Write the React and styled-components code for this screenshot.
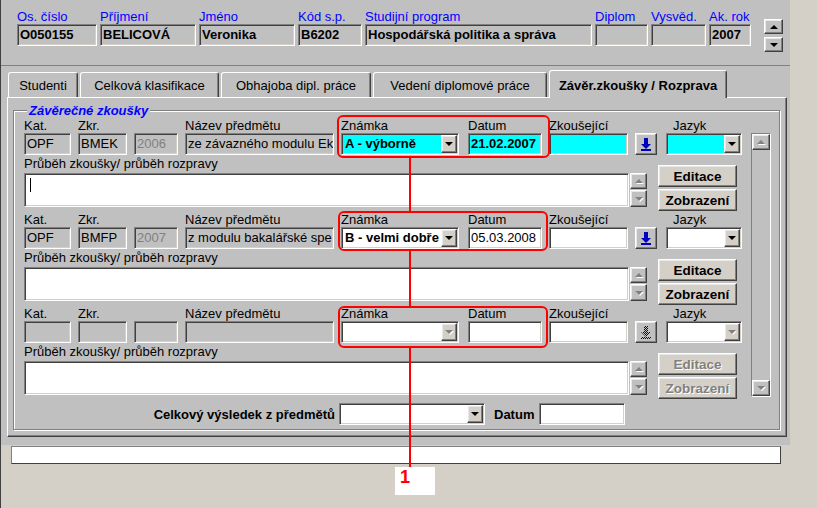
import React from "react";
import styled, { createGlobalStyle } from "styled-components";

const GlobalStyle = createGlobalStyle`
  html, body {
    margin: 0;
    padding: 0;
  }
  body {
    background: #d4d0c8;
    font-family: "Liberation Sans", Arial, sans-serif;
    font-size: 13px;
    color: #000;
  }
`;

const sunken = `
  border: 1px solid;
  border-color: #808080 #ffffff #ffffff #808080;
  box-shadow: inset 1px 1px 0 #404040, inset -1px -1px 0 #d4d0c8;
`;

const raised = `
  border: 1px solid;
  border-color: #ffffff #404040 #404040 #ffffff;
  box-shadow: inset -1px -1px 0 #808080, inset 1px 1px 0 #e8e8e8;
`;

const header = [
  { label: "Os. číslo", value: "O050155" },
  { label: "Příjmení", value: "BELICOVÁ" },
  { label: "Jméno", value: "Veronika" },
  { label: "Kód s.p.", value: "B6202" },
  { label: "Studijní program", value: "Hospodářská politika a správa" },
  { label: "Diplom", value: "" },
  { label: "Vysvěd.", value: "" },
  { label: "Ak. rok", value: "2007" },
];

const tabs = [
  { title: "Studenti", width: 70 },
  { title: "Celková klasifikace", width: 139 },
  { title: "Obhajoba dipl. práce", width: 150 },
  { title: "Vedení diplomové práce", width: 174 },
  { title: "Závěr.zkoušky / Rozprava", width: 178, active: true },
];

const records = [
  {
    kat: "OPF",
    zkr: "BMEK",
    rok: "2006",
    nazev: "ze závazného modulu Ek",
    znamka: "A - výborně",
    datum: "21.02.2007",
    datumBold: true,
    current: true,
  },
  {
    kat: "OPF",
    zkr: "BMFP",
    rok: "2007",
    nazev: "z modulu bakalářské spe",
    znamka: "B - velmi dobře",
    datum: "05.03.2008",
  },
  { empty: true },
];

const Screen = styled.div`
  position: relative;
  width: 817px;
  height: 508px;
  box-sizing: border-box;
  border-left: 1px solid #404040;
  overflow: hidden;
`;

const Window = styled.div`
  width: 789px;
  height: 445px;
  background: #c0c0c0;
`;

const Header = styled.div`
  display: flex;
  height: 66px;
  box-sizing: border-box;
  padding: 9px 0 0 16px;
  border-bottom: 1px solid #808080;
`;

const HeaderGrid = styled.div`
  display: grid;
  grid-template-columns: 80px 96px 96px 64px 227px 53px 55px 42px;
  grid-template-rows: 15px 22px;
  column-gap: 3px;
  grid-auto-flow: column;
`;

const HeadLabel = styled.div`
  color: #0000ff;
  line-height: 15px;
  white-space: nowrap;
`;

const HeadValue = styled.div`
  ${sunken};
  box-sizing: border-box;
  height: 22px;
  padding: 0 2px;
  font-size: 13px;
  font-weight: bold;
  line-height: 20px;
  white-space: nowrap;
  overflow: hidden;
`;

const SpinCol = styled.div`
  display: flex;
  flex-direction: column;
  gap: 3px;
  margin: 10px 0 0 13px;
`;

const SpinBtn = styled.div`
  ${raised};
  box-sizing: border-box;
  width: 19px;
  height: 15px;
  background: #c0c0c0;
  display: flex;
  align-items: center;
  justify-content: center;
`;

const Arrow = styled.span`
  width: 0;
  height: 0;
  border-left: ${(p) => p.$size || 4}px solid transparent;
  border-right: ${(p) => p.$size || 4}px solid transparent;
  ${(p) =>
    p.$up
      ? `border-bottom: ${p.$size || 4}px solid ${p.$color || "#000"};`
      : `border-top: ${p.$size || 4}px solid ${p.$color || "#000"};`}
  filter: ${(p) => (p.$dim ? "drop-shadow(1px 1px 0 #fff)" : "none")};
`;

const TabArea = styled.div`
  padding: 4px 0 0 6px;
`;

const TabStrip = styled.div`
  display: flex;
  align-items: flex-end;
  gap: 2px;
  height: 27px;
  padding-left: 1px;
  position: relative;
  z-index: 1;
`;

const Tab = styled.div`
  width: ${(p) => p.$width}px;
  height: ${(p) => (p.$active ? 28 : 25)}px;
  margin-bottom: ${(p) => (p.$active ? -1 : 0)}px;
  box-sizing: border-box;
  border: 1px solid;
  border-color: #ffffff #404040 transparent #ffffff;
  border-bottom: none;
  border-radius: 3px 3px 0 0;
  box-shadow: inset -1px 0 0 #808080;
  background: #c0c0c0;
  display: flex;
  align-items: center;
  justify-content: center;
  padding-top: ${(p) => (p.$active ? 1 : 0)}px;
  font-weight: ${(p) => (p.$active ? "bold" : "normal")};
  white-space: nowrap;
`;

const Panel = styled.div`
  width: 780px;
  height: 340px;
  box-sizing: border-box;
  border: 1px solid;
  border-color: #ffffff #404040 #404040 #ffffff;
  box-shadow: inset -1px -1px 0 #808080;
  padding: 5px 6px 0 5px;
`;

const Group = styled.fieldset`
  margin: 0;
  min-width: 0;
  padding: 0 8px 4px 10px;
  border: 1px solid #808080;
  box-shadow: inset 1px 1px 0 #ffffff, 1px 1px 0 #ffffff;
`;

const Legend = styled.legend`
  margin-left: 3px;
  padding: 0 2px;
  line-height: 15px;
  background: #c0c0c0;
  color: #0000ff;
  font-weight: bold;
  font-style: italic;
`;

const GroupBody = styled.div`
  display: flex;
  align-items: flex-start;
`;

const Records = styled.div`
  display: flex;
  flex-direction: column;
  gap: 1px;
  width: 718px;
`;

const Record = styled.div`
  display: flex;
  flex-direction: column;
`;

const TopGrid = styled.div`
  display: grid;
  grid-template-columns: 54px 56px 51px 156px 127px 81px 86px 31px 76px;
  grid-template-rows: 15px 22px;
  grid-auto-flow: column;
`;

const Label = styled.div`
  line-height: 15px;
  padding-left: ${(p) => p.$indent || 0}px;
  white-space: nowrap;
`;

const Field = styled.div`
  ${sunken};
  box-sizing: border-box;
  width: ${(p) => p.$width}px;
  height: 22px;
  padding: 0 2px;
  line-height: 20px;
  background: ${(p) => p.$bg || "#ffffff"};
  color: ${(p) => p.$color || "#000"};
  font-weight: ${(p) => (p.$bold ? "bold" : "normal")};
  white-space: nowrap;
  overflow: hidden;
`;

const SelectBox = styled.div`
  ${sunken};
  box-sizing: border-box;
  width: ${(p) => p.$width}px;
  height: 22px;
  padding: 1px;
  display: flex;
  background: ${(p) => p.$bg || "#ffffff"};
`;

const SelectValue = styled.div`
  flex: 1;
  min-width: 0;
  padding-left: 2px;
  line-height: 18px;
  font-weight: bold;
  white-space: nowrap;
  overflow: hidden;
`;

const DropBtn = styled.div`
  ${raised};
  box-sizing: border-box;
  width: 16px;
  height: 18px;
  background: #d4d0c8;
  display: flex;
  align-items: center;
  justify-content: center;
`;

const IconBtn = styled.div`
  ${raised};
  box-sizing: border-box;
  width: 22px;
  height: 22px;
  background: #c0c0c0;
  display: flex;
  align-items: center;
  justify-content: center;
`;

const Lower = styled.div`
  display: flex;
  height: 55px;
  margin-top: 1px;
`;

const NoteCol = styled.div`
  display: flex;
  flex-direction: column;
`;

const NoteLabel = styled.div`
  line-height: 16px;
  white-space: nowrap;
`;

const NoteRow = styled.div`
  display: flex;
  margin-top: 1px;
`;

const TextBox = styled.div`
  ${sunken};
  box-sizing: border-box;
  width: 605px;
  height: 34px;
  background: #ffffff;
  padding: 4px 0 0 5px;
`;

const Caret = styled.span`
  display: block;
  width: 1px;
  height: 14px;
  background: #000;
`;

const MiniScroll = styled.div`
  display: flex;
  flex-direction: column;
  gap: 1px;
  margin-left: 1px;
`;

const MiniBtn = styled.div`
  ${raised};
  box-sizing: border-box;
  width: 17px;
  height: ${(p) => p.$h}px;
  background: #c0c0c0;
  display: flex;
  align-items: center;
  justify-content: center;
`;

const ButtonCol = styled.div`
  display: flex;
  flex-direction: column;
  gap: 2px;
  margin: 9px 0 0 11px;
`;

const ActionBtn = styled.div`
  ${raised};
  box-sizing: border-box;
  width: 79px;
  height: 22px;
  background: #d4d0c8;
  display: flex;
  align-items: center;
  justify-content: center;
  font-weight: bold;
  font-size: 13.5px;
  color: ${(p) => (p.$disabled ? "#808080" : "#000")};
  text-shadow: ${(p) => (p.$disabled ? "1px 1px 0 #ffffff" : "none")};
`;

const ScrollBar = styled.div`
  box-sizing: border-box;
  width: 20px;
  height: 264px;
  margin: 15px 0 0 9px;
  border: 1px solid;
  border-color: #808080 #ffffff #ffffff #808080;
  background: #c0c0c0;
  display: flex;
  flex-direction: column;
  justify-content: space-between;
`;

const ScrollBtn = styled.div`
  ${raised};
  box-sizing: border-box;
  width: 18px;
  height: 16px;
  background: #c0c0c0;
  display: flex;
  align-items: center;
  justify-content: center;
`;

const Summary = styled.div`
  display: flex;
  align-items: center;
  margin-top: 4px;
`;

const SummaryLabel = styled.div`
  width: 311px;
  margin-right: 4px;
  text-align: right;
  font-weight: bold;
  white-space: nowrap;
`;

const DateLabel = styled.div`
  margin: 0 5px 0 9px;
  font-weight: bold;
`;

const StatusBar = styled.div`
  width: 770px;
  height: 18px;
  margin: 1px 0 0 10px;
  box-sizing: border-box;
  border: 1px solid;
  border-color: #808080 #404040 #404040 #808080;
  background: #ffffff;
`;

const RedBox = styled.div`
  position: absolute;
  box-sizing: border-box;
  border: 2px solid #ff0000;
  border-radius: 6px;
  pointer-events: none;
`;

const RedLine = styled.div`
  position: absolute;
  width: 2px;
  background: #ff0000;
`;

const Callout = styled.div`
  position: absolute;
  left: 394px;
  top: 467px;
  width: 40px;
  height: 28px;
  background: #ffffff;
  box-sizing: border-box;
  padding: 1px 0 0 5px;
  color: #ff0000;
  font-size: 18px;
  font-weight: bold;
  line-height: 18px;
`;

const DownloadIcon = ({ disabled }) => (
  <svg width="10" height="13" viewBox="0 0 10 13">
    <defs>
      <pattern id="dith" width="2" height="2" patternUnits="userSpaceOnUse">
        <rect width="1" height="1" fill="#000080" />
        <rect x="1" y="1" width="1" height="1" fill="#000080" />
      </pattern>
    </defs>
    <g fill={disabled ? "url(#dith)" : "#0000c0"}>
      <rect x="3" y="0" width="4" height="6" />
      <polygon points="0,6 10,6 5,11" />
      <rect x="0" y="11" width="10" height="2" />
    </g>
  </svg>
);

const Select = ({ width, bg, value, disabled }) => (
  <SelectBox $width={width} $bg={bg}>
    <SelectValue>{value}</SelectValue>
    <DropBtn>
      <Arrow $size={4} $color={disabled ? "#808080" : "#000"} $dim={disabled} />
    </DropBtn>
  </SelectBox>
);

const ExamRecord = ({ r }) => {
  const cur = r.current ? "#00ffff" : "#ffffff";
  return (
    <Record>
      <TopGrid>
        <Label>Kat.</Label>
        <Field $width={47} $bg="#c0c0c0">{r.kat}</Field>
        <Label>Zkr.</Label>
        <Field $width={49} $bg="#c0c0c0">{r.zkr}</Field>
        <Label />
        <Field $width={44} $bg="#c0c0c0" $color="#808080">{r.rok}</Field>
        <Label>Název předmětu</Label>
        <Field $width={149} $bg="#c0c0c0">{r.nazev}</Field>
        <Label>Známka</Label>
        <Select width={118} bg={cur} value={r.znamka} disabled={r.empty} />
        <Label>Datum</Label>
        <Field $width={74} $bg={cur} $bold={r.datumBold}>{r.datum}</Field>
        <Label>Zkoušející</Label>
        <Field $width={79} $bg={cur} />
        <Label />
        <IconBtn>
          <DownloadIcon disabled={r.empty} />
        </IconBtn>
        <Label $indent={7}>Jazyk</Label>
        <Select width={76} bg={cur} disabled={r.empty} />
      </TopGrid>
      <Lower>
        <NoteCol>
          <NoteLabel>Průběh zkoušky/ průběh rozpravy</NoteLabel>
          <NoteRow>
            <TextBox>{r.current && <Caret />}</TextBox>
            <MiniScroll>
              <MiniBtn $h={16}>
                <Arrow $up $size={4} $color="#808080" $dim />
              </MiniBtn>
              <MiniBtn $h={17}>
                <Arrow $size={4} $color="#808080" $dim />
              </MiniBtn>
            </MiniScroll>
          </NoteRow>
        </NoteCol>
        <ButtonCol>
          <ActionBtn $disabled={r.empty}>Editace</ActionBtn>
          <ActionBtn $disabled={r.empty}>Zobrazení</ActionBtn>
        </ButtonCol>
      </Lower>
    </Record>
  );
};

export default function App() {
  return (
    <>
      <GlobalStyle />
      <Screen>
        <Window>
          <Header>
            <HeaderGrid>
              {header.map((h) => (
                <React.Fragment key={h.label}>
                  <HeadLabel>{h.label}</HeadLabel>
                  <HeadValue>{h.value}</HeadValue>
                </React.Fragment>
              ))}
            </HeaderGrid>
            <SpinCol>
              <SpinBtn>
                <Arrow $up $size={4} />
              </SpinBtn>
              <SpinBtn>
                <Arrow $size={4} />
              </SpinBtn>
            </SpinCol>
          </Header>
          <TabArea>
            <TabStrip>
              {tabs.map((t) => (
                <Tab key={t.title} $width={t.width} $active={t.active}>
                  {t.title}
                </Tab>
              ))}
            </TabStrip>
            <Panel>
              <Group>
                <Legend>Závěrečné zkoušky</Legend>
                <GroupBody>
                  <Records>
                    {records.map((r, i) => (
                      <ExamRecord key={i} r={r} />
                    ))}
                  </Records>
                  <ScrollBar>
                    <ScrollBtn>
                      <Arrow $up $size={4} $color="#808080" $dim />
                    </ScrollBtn>
                    <ScrollBtn>
                      <Arrow $size={4} $color="#808080" $dim />
                    </ScrollBtn>
                  </ScrollBar>
                </GroupBody>
                <Summary>
                  <SummaryLabel>Celkový výsledek z předmětů</SummaryLabel>
                  <Select width={146} />
                  <DateLabel>Datum</DateLabel>
                  <Field $width={86} />
                </Summary>
              </Group>
            </Panel>
          </TabArea>
        </Window>
        <StatusBar />

        <RedBox style={{ left: 336, top: 115, width: 213, height: 43 }} />
        <RedBox style={{ left: 337, top: 211, width: 210, height: 40 }} />
        <RedBox style={{ left: 337, top: 306, width: 210, height: 42 }} />
        <RedLine style={{ left: 408, top: 158, height: 53 }} />
        <RedLine style={{ left: 408, top: 251, height: 55 }} />
        <RedLine style={{ left: 408, top: 348, height: 120 }} />
        <Callout>1</Callout>
      </Screen>
    </>
  );
}
